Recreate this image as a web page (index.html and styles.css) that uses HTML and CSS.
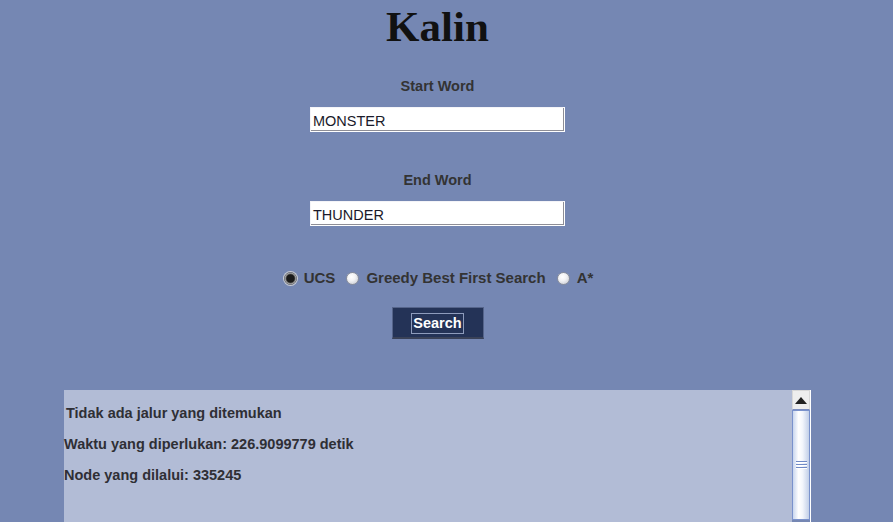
FILE: index.html
```html
<!DOCTYPE html>
<html>
<head>
<meta charset="utf-8">
<link rel="stylesheet" href="styles.css">
</head>
<body>
<div class="app">
  <h1 class="title">Kalin</h1>
  <div class="label label-start">Start Word</div>
  <div class="field">MONSTER</div>
  <div class="label label-end">End Word</div>
  <div class="field">THUNDER</div>
  <div class="radios">
    <span class="radio checked"></span><span class="rlabel">UCS</span>
    <span class="radio"></span><span class="rlabel">Greedy Best First Search</span>
    <span class="radio"></span><span class="rlabel">A*</span>
  </div>
  <div class="button"><span class="focus">Search</span></div>
  <div class="output">
    <div class="text">
      <div class="line first">Tidak ada jalur yang ditemukan</div>
      <div class="line">Waktu yang diperlukan: 226.9099779 detik</div>
      <div class="line">Node yang dilalui: 335245</div>
    </div>
    <div class="scrollbar">
      <div class="arrow"><svg width="12" height="7" viewBox="0 0 12 7"><path d="M0 7 L6 0 L12 7 Z" fill="#222"/></svg></div>
      <div class="thumb"><span class="grip"></span><span class="grip"></span><span class="grip"></span></div>
    </div>
  </div>
</div>
</body>
</html>
```

FILE: styles.css
```css
html, body {
  margin: 0;
  padding: 0;
  background: #7587b3;
  height: 522px;
  overflow: hidden;
}
.app {
  width: 875px;
  display: flex;
  flex-direction: column;
  align-items: center;
  font-family: "Liberation Sans", Arial, sans-serif;
  color: #333;
}
.title {
  margin: 3px 0 0 0;
  height: 48px;
  line-height: 48px;
  font-family: "Liberation Serif", "Times New Roman", serif;
  font-weight: bold;
  font-size: 43px;
  color: #111;
}
.label {
  height: 16px;
  line-height: 16px;
  font-size: 14.5px;
  font-weight: bold;
}
.label-start { margin-top: 27px; }
.label-end { margin-top: 40px; }
.field {
  margin-top: 13px;
  box-sizing: border-box;
  width: 255px;
  height: 25px;
  background: #fff;
  border: 1px solid #f4f4f8;
  border-right-color: #fff;
  border-bottom-color: #fff;
  box-shadow: inset -1px -1px 0 #8e8e96;
  padding: 1px 0 0 2px;
  line-height: 24px;
  font-size: 14.5px;
  color: #1a1a2a;
}
.radios {
  margin-top: 42px;
  height: 20px;
  display: flex;
  align-items: center;
  padding-left: 2px;
}
.radio {
  box-sizing: border-box;
  width: 13px;
  height: 13px;
  border-radius: 50%;
  border: 1px solid #8a8f9c;
  background: radial-gradient(circle at 40% 35%, #ffffff 0%, #f2f2f4 40%, #bfc3cc 100%);
  margin-right: 7px;
}
.radio.checked {
  box-shadow: 0 0 0 1px #c9ccd4;
  background: radial-gradient(circle, #1a1a1a 0%, #1a1a1a 48%, #6a6a6a 60%, #e6e6e6 75%);
  border-color: #777;
}
.rlabel {
  font-size: 15px;
  font-weight: bold;
  margin-right: 11px;
  line-height: 20px;
}
.rlabel:last-child { margin-right: 0; }
.button {
  margin-top: 19px;
  box-sizing: border-box;
  width: 92px;
  height: 32px;
  padding-top: 2px;
  background: #243357;
  border: 1px solid #55648a;
  border-bottom: 2px solid #3a4258;
  display: flex;
  align-items: center;
  justify-content: center;
}
.focus {
  box-sizing: border-box;
  height: 21px;
  padding: 0 1px;
  border: 1px solid #8e9cbc;
  line-height: 19px;
  color: #fff;
  font-weight: bold;
  font-size: 14.5px;
}
.output {
  margin-top: 51px;
  width: 747px;
  height: 140px;
  display: flex;
  background: #b2bcd6;
}
.text {
  flex: 1;
  padding-top: 15px;
}
.line {
  height: 16px;
  line-height: 16px;
  font-size: 14.5px;
  font-weight: bold;
  color: #2f2f35;
  margin-bottom: 15px;
}
.line.first { padding-left: 2px; }
.scrollbar {
  width: 19px;
  box-sizing: border-box;
  border-right: 1px solid #ffffff;
  background: #7587b3;
  display: flex;
  flex-direction: column;
}
.arrow {
  box-sizing: border-box;
  height: 20px;
  background: #eeeeee;
  border: 1px solid #d8d8d8;
  border-bottom: 1px solid #7a8cc0;
  display: flex;
  align-items: center;
  justify-content: center;
}
.thumb {
  box-sizing: border-box;
  height: 110px;
  border: 1px solid #7a92cc;
  background: linear-gradient(to right, #c9d6ee 0%, #ffffff 35%, #f2f5fb 60%, #c2cfe8 100%);
  display: flex;
  flex-direction: column;
  align-items: center;
  justify-content: center;
  gap: 1px;
}
.grip {
  width: 11px;
  height: 1px;
  background: #6f8ac6;
  border-bottom: 1px solid #ffffff;
}
```
